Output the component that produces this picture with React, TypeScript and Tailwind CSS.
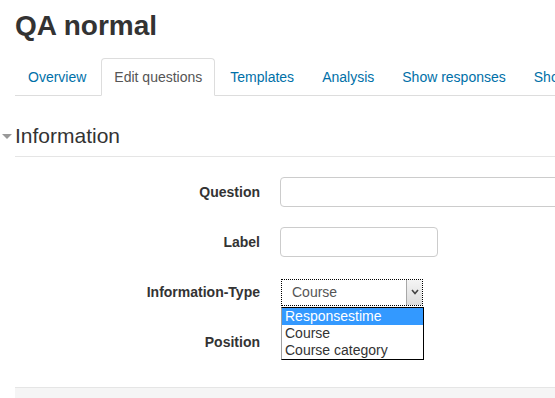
import React from "react";

const tabs = ["Overview", "Edit questions", "Templates", "Analysis", "Show responses", "Show non-respondents"];

function Row({ label, children }: { label: string; children?: React.ReactNode }) {
  return (
    <div className="flex items-center h-[30px] mb-[20px]">
      <div className="w-[245px] shrink-0 text-right text-[14px] font-bold text-[#333] leading-[20px]">{label}</div>
      <div className="ml-[20px] flex items-center">{children}</div>
    </div>
  );
}

export default function App() {
  return (
    <div className="relative w-[555px] h-[398px] overflow-hidden bg-white text-[#333] font-['Liberation_Sans',Arial,sans-serif]">
      <div className="pl-[15px]">
        <h1 className="pt-[10px] text-[28px] font-bold leading-[32px] text-[#333]">QA normal</h1>
        <ul className="mt-[16px] flex whitespace-nowrap border-b border-[#ddd] w-[700px]">
          {tabs.map((t) => {
            const active = t === "Edit questions";
            return (
              <li key={t} className="-mb-px mr-[2px]">
                <span
                  className={
                    active
                      ? "block px-[12px] py-[8px] leading-[20px] text-[14px] border border-[#ddd] border-b-white rounded-t-[4px] bg-white text-[#555]"
                      : "block px-[12px] py-[8px] leading-[20px] text-[14px] border border-transparent rounded-t-[4px] text-[#0070a8]"
                  }
                >
                  {t}
                </span>
              </li>
            );
          })}
        </ul>
        <div className="relative mt-[29px] pb-[9px] border-b border-[#e5e5e5]">
          <svg className="absolute left-[-13px] top-[9px]" width="10" height="5" viewBox="0 0 10 5">
            <polygon points="0,0 10,0 5,5" fill="#999" />
          </svg>
          <div className="text-[21px] leading-[22px] text-[#333]">Information</div>
        </div>
        <div className="pt-[20px]">
          <Row label="Question">
            <div className="w-[300px] h-[30px] border border-[#ccc] rounded-[4px] bg-white" />
          </Row>
          <Row label="Label">
            <div className="w-[158px] h-[30px] border border-[#ccc] rounded-[4px] bg-white" />
          </Row>
          <Row label="Information-Type">
            <div className="ml-px flex w-[142px] h-[27px] border border-dotted border-black bg-white">
              <div className="flex-1 pl-[10px] text-[14px] leading-[25px] text-[#555]">Course</div>
              <div className="w-[16px] h-full border-l border-[#a8a8a8] bg-gradient-to-b from-[#f4f4f4] to-[#dcdcdc] flex items-center justify-center">
                <svg width="8" height="6" viewBox="0 0 8 6">
                  <polyline points="1,1 4,4.5 7,1" fill="none" stroke="#444" strokeWidth="1.6" />
                </svg>
              </div>
            </div>
          </Row>
          <Row label="Position" />
        </div>
        <div className="mt-[30px] h-[30px] border-t border-[#e5e5e5] bg-[#f5f5f5]" />
      </div>
      <div className="absolute left-[281px] top-[307px] w-[143px] border border-black border-l-[#a0a0a0] bg-white text-[14px] leading-[17px] text-[#333]">
        <div className="pl-[3px] bg-[#3399ff] text-white">Responsestime</div>
        <div className="pl-[3px]">Course</div>
        <div className="pl-[3px]">Course category</div>
      </div>
    </div>
  );
}
